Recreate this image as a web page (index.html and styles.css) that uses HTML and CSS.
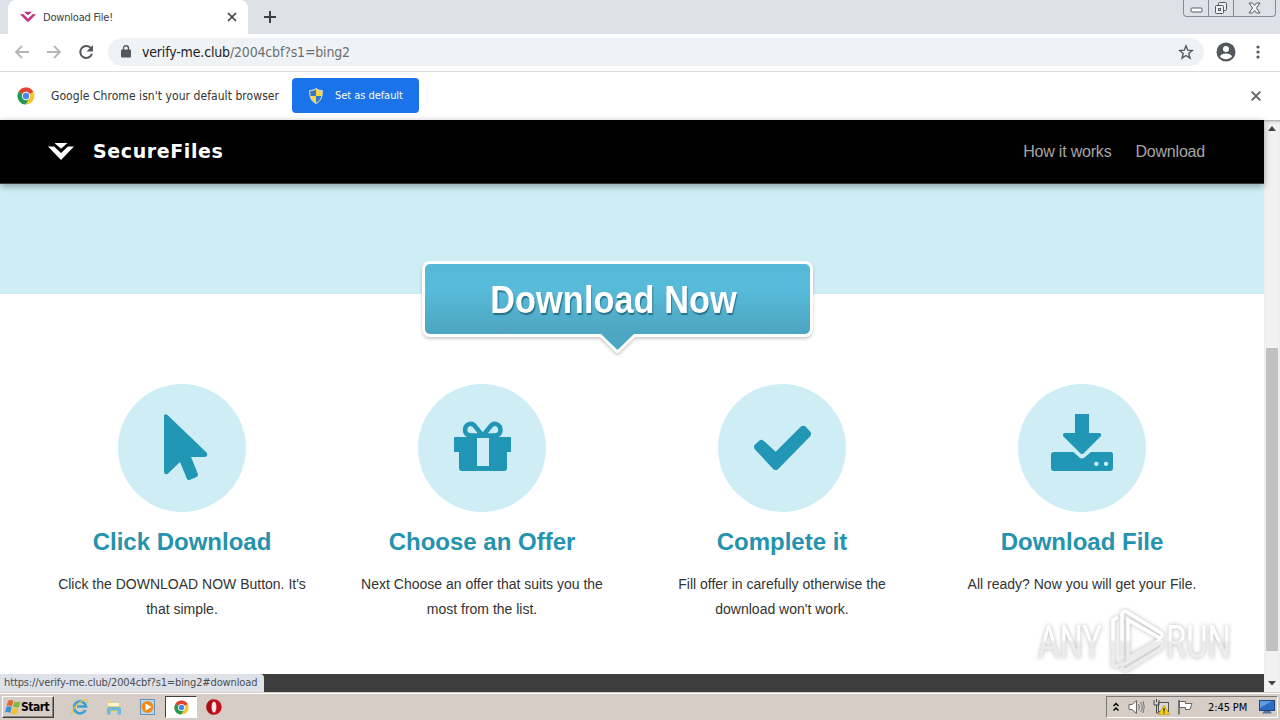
FILE: index.html
```html
<!DOCTYPE html>
<html lang="en">
<head>
    <meta charset="UTF-8">
    <meta name="viewport" content="width=device-width, initial-scale=1.0">
    <title>Download File!</title>
    <link rel="stylesheet" href="styles.css">
</head>
<body>
    <!-- Tab strip -->
    <div class="tabstrip">
        <div class="tab">
            <svg class="tab-icon" width="16" height="12" viewBox="0 0 28 18"><path fill="#c22d7d" d="M0 4h6l8 8 8-8h6L14 18zM7 0h14l-7 6z"/></svg>
            <span class="tab-title">Download File!</span>
            <svg width="10" height="10" viewBox="0 0 10 10"><path d="M1 1l8 8M9 1L1 9" stroke="#3c4043" stroke-width="1.7"/></svg>
        </div>
        <svg class="new-tab" width="12" height="12" viewBox="0 0 12 12"><path d="M6 0v12M0 6h12" stroke="#3c4043" stroke-width="2"/></svg>
        <div class="window-buttons">
            <span class="win-min"><svg width="13" height="6" viewBox="0 0 13 6"><rect x="1" y="1" width="11" height="4" rx="1" fill="#fff" stroke="#555b66"/></svg></span>
            <span class="win-max"><svg width="14" height="14" viewBox="0 0 14 14"><rect x="4.500" y="1.500" width="8" height="8" rx="1" fill="#eee" stroke="#555b66"/><rect x="1.500" y="4.500" width="8" height="8" rx="1" fill="#eee" stroke="#555b66"/><rect x="4.500" y="7.500" width="2" height="2" fill="none" stroke="#555b66"/></svg></span>
            <span class="win-close"><svg width="13" height="12" viewBox="0 0 13 12"><path d="M1 1h3.500l2 2.500L8.500 1H12L8.500 6 12 11H8.500l-2-2.500-2 2.500H1l3.500-5z" fill="#f4f4f4" stroke="#555b66"/></svg></span>
        </div>
    </div>

    <!-- Toolbar -->
    <div class="toolbar">
        <svg class="nav-icon" width="16" height="14" viewBox="0 0 16 14"><path d="M15 7H2M8 1L2 7l6 6" fill="none" stroke="#b4b7ba" stroke-width="1.800"/></svg>
        <svg class="nav-icon" width="16" height="14" viewBox="0 0 16 14"><path d="M1 7h13M8 1l6 6-6 6" fill="none" stroke="#b4b7ba" stroke-width="1.800"/></svg>
        <svg class="nav-icon" width="16" height="16" viewBox="0 0 16 16"><path d="M13.200 4.500A6 6 0 1 0 14 9.800" fill="none" stroke="#54575b" stroke-width="2"/><path d="M15 1v6.500H8.500z" fill="#54575b"/></svg>
        <div class="address">
            <svg width="10" height="13" viewBox="0 0 10 13"><rect y="4.500" width="10" height="8" rx="1" fill="#54575b"/><path d="M2.500 5V3.200a2.500 2.500 0 0 1 5 0V5" fill="none" stroke="#54575b" stroke-width="1.400"/></svg>
            <span class="url"><b>verify-me.club</b>/2004cbf?s1=bing2</span>
            <svg class="star" width="16" height="16" viewBox="0 0 16 16"><path d="M8 1.800l1.700 4.400 4.700.3-3.600 3 1.200 4.600L8 11.500l-4 2.600 1.200-4.600-3.600-3 4.700-.3z" fill="none" stroke="#54575b" stroke-width="1.400"/></svg>
        </div>
        <svg class="avatar" width="20" height="20" viewBox="0 0 20 20"><circle cx="10" cy="10" r="9.500" fill="#54575b"/><circle cx="10" cy="7" r="3" fill="#fff"/><path d="M4 14.500c1-4 11-4 12 0-3 3.600-9 3.600-12 0z" fill="#fff"/></svg>
        <svg class="menu" width="4" height="14" viewBox="0 0 4 14"><g fill="#54575b"><circle cx="2" cy="2" r="1.600"/><circle cx="2" cy="7" r="1.600"/><circle cx="2" cy="12" r="1.600"/></g></svg>
    </div>

    <!-- Default browser bar -->
    <div class="infobar">
        <svg width="18" height="18" viewBox="0 0 18 18"><circle cx="9" cy="9" r="8.500" fill="#f7c52d"/><path d="M1.600 4.800A8.500 8.500 0 0 1 16.400 4.800L9 9z" fill="#dd4433"/><path d="M1.600 4.800A8.500 8.500 0 0 0 8.500 17.500l4-6.500L9 9z" fill="#229a55"/><circle cx="9" cy="9" r="4.200" fill="#fff"/><circle cx="9" cy="9" r="3.200" fill="#4a85ec"/></svg>
        <span class="infobar-text">Google Chrome isn't your default browser</span>
        <button class="default-btn">
            <svg width="14" height="16" viewBox="0 0 14 16"><path d="M7 .5c2 1.500 4 2 6.300 2C13.500 9 12 13 7 15.500 2 13 .5 9 .7 2.500 3 2.500 5 2 7 .5z" fill="#f8d643" stroke="#d3dce6"/><path d="M7 1.500V8H1.500L1.200 3.300C4 3 5 2.500 7 1.500zM7 8h5.300c-.7 3.500-2.300 5.300-5.300 6.800z" fill="#3277c9"/></svg>
            <span>Set as default</span>
        </button>
        <svg class="infobar-close" width="10" height="10" viewBox="0 0 10 10"><path d="M.7.700l8.600 8.600M9.300.700L.7 9.300" stroke="#5f6368" stroke-width="1.900"/></svg>
    </div>

    <!-- Page -->
    <div class="viewport">
        <div class="page">
            <header class="header">
                <svg width="26" height="17" viewBox="0 0 26 17"><path fill="#fff" d="M0 3.500h6l7 6.500 7-6.500h6L13 17zM6.500 0h13L13 5.700z"/></svg>
                <span class="brand">SecureFiles</span>
                <nav>
                    <a>How it works</a>
                    <a>Download</a>
                </nav>
            </header>
            <div class="hero"></div>
            <a class="download-btn">
                <svg width="399" height="101" viewBox="-4 -4 399 101">
                    <defs>
                        <linearGradient id="btnFill" x1="0" y1="0" x2="0" y2="1">
                            <stop offset="0" stop-color="#55b8d6"/>
                            <stop offset=".3" stop-color="#57bbd9"/>
                            <stop offset=".8" stop-color="#4da5c1"/>
                            <stop offset="1" stop-color="#48a9c6"/>
                        </linearGradient>
                    </defs>
                    <path class="btn-outline" d="M8 0H383a8 8 0 0 1 8 8V68a8 8 0 0 1-8 8H213L197 91.500q-1.500 1.500-3 0L178 76H8a8 8 0 0 1-8-8V8a8 8 0 0 1 8-8z"/>
                    <path d="M8 3H383a5 5 0 0 1 5 5V68a5 5 0 0 1-5 5H212L195.500 89 179 73H8a5 5 0 0 1-5-5V8a5 5 0 0 1 5-5z" fill="url(#btnFill)"/>
                </svg>
                <span>Download Now</span>
            </a>
            <div class="steps">
                <div class="step">
                    <svg class="step-icon" viewBox="0 0 128 128"><path d="M46 32Q46 29 49.500 31L88.500 68.500Q90.500 72 87 73H73L80 90Q80 92 79 92.700L71.500 96Q69.500 96.500 69 95L62 78 49.500 90Q46.500 91 46 88z"/></svg>
                    <h2>Click Download</h2>
                    <p>Click the DOWNLOAD NOW Button. It's that simple.</p>
                </div>
                <div class="step">
                    <svg class="step-icon" viewBox="0 0 128 128">
                        <path fill-rule="evenodd" d="M37 53H92.500Q93 53 93 54V68H89V84Q89 87 86 87H44Q41 87 41 84V68H36V54Q36 53 37 53zM59 54V82H71V54z"/>
                        <path class="bow" d="M64.500 51.500L58 43.500C54 37 47 40 47 46 47 50 50 51.500 54 51.500zM65 51.500L71.500 43.500C75.500 37 82.500 40 82.500 46 82.500 50 80 51.500 76 51.500z"/>
                    </svg>
                    <h2>Choose an Offer</h2>
                    <p>Next Choose an offer that suits you the most from the list.</p>
                </div>
                <div class="step">
                    <svg class="step-icon" viewBox="0 0 128 128"><path d="M36.500 61Q35.300 63.500 37 65.500L55.500 85.200Q57.700 87 60 85.200L92 52.500Q94 50 92.500 48L87.500 42.500Q85.500 41 83 42.500L57.700 67.700 46 57Q43.500 55 41.500 56.500z"/></svg>
                    <h2>Complete it</h2>
                    <p>Fill offer in carefully otherwise the download won't work.</p>
                </div>
                <div class="step">
                    <svg class="step-icon" viewBox="0 0 128 128">
                        <path d="M57 30H71V49H81.500Q84 50 83 52L65.500 69.500Q64 70.500 62.500 69.500L45 52Q44.500 49.500 46.500 49H57z"/>
                        <path fill-rule="evenodd" d="M36 68H55.300L61.500 73.500Q64 75.500 66.500 73.500L73 68H93Q95 68 95 71V84Q95 87 92 87H36Q33 87 33 84V71Q33 68 36 68zM78.300 77.700a2.200 2.200 0 1 0 .1 0zM88 77.700a2.200 2.200 0 1 0 .1 0z"/>
                    </svg>
                    <h2>Download File</h2>
                    <p>All ready? Now you will get your File.</p>
                </div>
            </div>
            <footer class="footer"></footer>
        </div>
        <div class="scrollbar">
            <svg width="8" height="5" viewBox="0 0 8 5"><path d="M0 5l4-5 4 5z" fill="#444"/></svg>
            <div class="thumb"></div>
            <svg width="8" height="5" viewBox="0 0 8 5"><path d="M0 0l4 4.500L8 0z" fill="#444"/></svg>
        </div>
        <div class="status">https://verify-me.club/2004cbf?s1=bing2#download</div>
        <svg class="watermark" width="215" height="70" viewBox="0 0 215 70">
            <defs>
                <linearGradient id="wmFill" gradientUnits="userSpaceOnUse" x1="0" y1="0" x2="0" y2="70">
                    <stop offset=".48" stop-color="#fff"/>
                    <stop offset=".52" stop-color="#ececec"/>
                </linearGradient>
            </defs>
            <text x="2" y="52" textLength="64" lengthAdjust="spacingAndGlyphs">ANY</text>
            <text x="130" y="52" textLength="65" lengthAdjust="spacingAndGlyphs">RUN</text>
            <path d="M82 11l-5 3v44q2 4 6 1l4-2M86 53V8q1-4 5-2l34 21q3 3-1 5L92 14v38l33-19M85 61q3 5 7 2l32-20q4-3 2-7L85 60"/>
        </svg>
    </div>

    <!-- Taskbar -->
    <div class="taskbar">
        <div class="start">
            <svg width="16" height="16" viewBox="0 0 16 16"><path d="M3 2q3-2 5.500 0L7 7.500Q4.500 6 1.500 7z" fill="#e2683a"/><path d="M9.500 2.500q3 1.500 6 0L14 8q-3 1.300-6-.2z" fill="#7fb843"/><path d="M1.300 8q3-1.500 5.500.3L5.300 14Q3 12.300 0 13.500z" fill="#3f8fd4"/><path d="M7.700 8.700q3 1.500 6 .3L12 14.500q-3 1.500-5.700-.2z" fill="#f2c136"/></svg>
            <span>Start</span>
        </div>
        <div class="launch">
            <svg width="18" height="18" viewBox="0 0 18 18"><path d="M14.500 12A6 6 0 1 1 15 8.500H6" fill="none" stroke="#3c9fd9" stroke-width="2.600"/><path d="M2 15C-1 18 1 10 8 5s10-4 8 0" fill="none" stroke="#e2c34c" stroke-width="1.300"/></svg>
            <svg width="18" height="18" viewBox="0 0 18 18"><path d="M2 3h5l1 2h7v9H2z" fill="#ecd06c"/><path d="M3 5h11v3H3z" fill="#fff6ca"/><path d="M2 16.500V11q0-2 2-2h10q2 0 2 2v5.500h-3.500v-4h-7v4z" fill="#6db8dc"/></svg>
            <svg width="18" height="18" viewBox="0 0 18 18"><rect x="1.500" y="1.500" width="14" height="15" fill="#b8d8f0" stroke="#6494bd"/><circle cx="8.500" cy="9" r="6" fill="#f18b1d"/><path d="M6.500 5.500v7l6-3.500z" fill="#fff"/></svg>
        </div>
        <div class="task-active">
            <svg width="15" height="15" viewBox="0 0 18 18"><circle cx="9" cy="9" r="8.500" fill="#f7c52d"/><path d="M1.600 4.800A8.500 8.500 0 0 1 16.400 4.800L9 9z" fill="#dd4433"/><path d="M1.600 4.800A8.500 8.500 0 0 0 8.500 17.500l4-6.500L9 9z" fill="#229a55"/><circle cx="9" cy="9" r="4.200" fill="#fff"/><circle cx="9" cy="9" r="3.200" fill="#4a85ec"/></svg>
        </div>
        <svg class="opera" width="16" height="16" viewBox="0 0 16 16"><circle cx="8" cy="8" r="7.700" fill="#c4121a"/><ellipse cx="8" cy="8" rx="2.400" ry="5.500" fill="#f5e8e5"/><path d="M8 0a8 8 0 0 0 0 16C4 13 4 3 8 0z" fill="#8d0a10" opacity=".4"/></svg>
        <div class="tray">
            <svg width="6" height="10" viewBox="0 0 6 10"><path d="M.5 4L3 1.500 5.500 4M.5 8.500L3 6l2.500 2.500" fill="none" stroke="#000" stroke-width="1.500"/></svg>
            <svg class="tray-sound" width="17" height="16" viewBox="0 0 17 16"><path d="M1 5.500h3l4.500-4v13L4 10.500H1z" fill="#fff" stroke="#666"/><path d="M10.500 5q2 3 0 6M12.500 3q3.500 5 0 10M15 2q2.500 6 0 12" fill="none" stroke="#777"/></svg>
            <svg class="tray-net" width="17" height="16" viewBox="0 0 17 16"><rect x="5.500" y="3.500" width="10" height="9" fill="#d8d8d8" stroke="#555"/><path d="M1 1v5h5V1M3.500 6v8h5M3.500 0v3" fill="none" stroke="#444"/><path d="M11 6l5.500 9.500h-11z" fill="#f6cf16" stroke="#b99409" stroke-width=".6"/><path d="M11 9v3.500M11 13.500v1" stroke="#222" stroke-width="1.300"/></svg>
            <svg class="tray-flag" width="17" height="16" viewBox="0 0 17 16"><path d="M2.500 2.500h6v2h6.500l-2 6H8.500v-2h-6z" fill="#fff" stroke="#666"/><path d="M2 1v14.500" stroke="#666" stroke-width="1.600"/></svg>
            <span class="clock">2:45 PM</span>
            <svg width="16" height="14" viewBox="0 0 16 14"><rect x=".5" y=".5" width="15" height="10" fill="#2e6cc4" stroke="#1d457e"/><path d="M1 1h12L1 8z" fill="#609be0"/><path d="M5 11h6l2 2.500H3z" fill="#55749c"/></svg>
        </div>
    </div>
</body>
</html>
```
FILE: styles.css
```css
* {
    box-sizing: border-box;
}

body {
    margin: 0;
    width: 1280px;
    height: 720px;
    overflow: hidden;
    display: flex;
    flex-direction: column;
    font-family: "DejaVu Sans Condensed", "DejaVu Sans", sans-serif;
    background: #fff;
}

svg {
    display: block;
    flex-shrink: 0;
}

/* Browser chrome */
.tabstrip {
    height: 34px;
    display: flex;
    align-items: flex-start;
    background: #dee1e8;
    padding-left: 8px;
}

.tab {
    width: 240px;
    height: 34px;
    display: flex;
    align-items: center;
    padding: 0 11px 0 12px;
    background: #fff;
    border-radius: 8px 8px 0 0;
}

.tab-title {
    flex: 1;
    margin-left: 7px;
    font-size: 11px;
    letter-spacing: -0.2px;
    color: #3c4043;
}

.new-tab {
    margin: 11px 0 0 16px;
}

.window-buttons {
    display: flex;
    width: 93px;
    height: 17px;
    margin-left: auto;
    margin-right: 4px;
    border: 1px solid #858c99;
    border-top: 0;
    border-radius: 0 0 4px 4px;
}

.window-buttons span {
    display: flex;
    align-items: center;
    justify-content: center;
    border-right: 1px solid #858c99;
}

.win-min {
    width: 25px;
    padding-top: 4px;
}

.win-max {
    width: 25px;
}

.window-buttons .win-close {
    flex: 1;
    border-right: 0;
}

.toolbar {
    height: 38px;
    display: flex;
    align-items: center;
    padding: 0 20px 2px 14px;
    border-bottom: 1px solid #d9dbde;
}

.nav-icon {
    margin-right: 16px;
}

.address {
    flex: 1;
    height: 28px;
    display: flex;
    align-items: center;
    margin-left: -2px;
    padding: 0 10px 0 13px;
    border-radius: 14px;
    background: #f0f3f5;
}

.url {
    flex: 1;
    margin-left: 11px;
    font-size: 14px;
    letter-spacing: -0.17px;
    color: #6b6f73;
}

.url b {
    font-weight: normal;
    color: #202124;
}

.avatar {
    margin: 0 20px 0 12px;
}

.infobar {
    height: 48px;
    display: flex;
    align-items: center;
    padding: 0 19px 1px 17px;
}

.infobar-text {
    width: 241px;
    margin-left: 16px;
    font-size: 12px;
    letter-spacing: 0.06px;
    white-space: nowrap;
    color: #333;
}

.default-btn {
    display: flex;
    align-items: center;
    width: 127px;
    height: 35px;
    padding: 0 0 0 17px;
    border: 0;
    border-radius: 4px;
    background: #1a73e8;
    color: #fff;
    font-family: inherit;
    font-size: 11px;
    letter-spacing: -0.05px;
    white-space: nowrap;
}

.default-btn span {
    margin-left: 12px;
}

.infobar-close {
    margin-left: auto;
}

/* Page */
.viewport {
    position: relative;
    height: 572px;
    display: flex;
}

.page {
    width: 1264px;
    display: flex;
    flex-direction: column;
    font-family: "Liberation Sans", Arial, sans-serif;
}

.header {
    position: relative;
    z-index: 1;
    height: 64px;
    display: flex;
    align-items: center;
    padding: 0 59px 0 48px;
    background: #000;
    border-bottom: 1px solid #35393b;
    box-shadow: 0 2px 7px rgba(0, 0, 0, 0.35);
}

.brand {
    margin-left: 19px;
    padding-bottom: 2px;
    font-family: "DejaVu Sans", sans-serif;
    font-size: 19px;
    font-weight: bold;
    letter-spacing: 0.6px;
    color: #fff;
}

nav {
    display: flex;
    gap: 24px;
    margin-left: auto;
    padding-top: 1px;
}

nav a {
    font-size: 16px;
    letter-spacing: -0.2px;
    color: #a6a6a6;
}

.hero {
    height: 110px;
    background: #ceedf5;
}

.download-btn {
    position: relative;
    width: 391px;
    height: 93px;
    margin: -33px 0 30px 422px;
}

.download-btn svg {
    margin: -4px;
}

.btn-outline {
    fill: #fff;
    filter: drop-shadow(0 2px 1.5px rgba(0, 0, 0, 0.2));
}

.download-btn span {
    position: absolute;
    top: 0;
    left: -4px;
    width: 391px;
    line-height: 78px;
    text-align: center;
    white-space: nowrap;
    font-size: 38px;
    font-weight: bold;
    color: #fff;
    text-shadow: 1px 2px 1px rgba(0, 60, 80, 0.55);
    transform: scaleX(0.905);
}

.steps {
    flex: 1;
    display: grid;
    grid-template-columns: repeat(4, 300px);
    justify-content: center;
}

.step {
    padding: 0 25px;
    text-align: center;
}

.step-icon {
    width: 128px;
    height: 128px;
    margin: 0 auto;
    border-radius: 50%;
    background: #ceedf5;
    fill: #2196b5;
}

.step-icon .bow {
    fill: none;
    stroke: #2196b5;
    stroke-width: 4.5;
    stroke-linejoin: round;
}

.step h2 {
    margin: 16px 0;
    font-size: 24px;
    line-height: 28px;
    color: #2593ae;
}

.step p {
    margin: 0;
    font-size: 14px;
    line-height: 25px;
    color: #333;
}

.footer {
    height: 18px;
    background: #3e3e3e;
}

.scrollbar {
    width: 16px;
    display: flex;
    flex-direction: column;
    align-items: center;
    padding: 6px 0;
    background: #f1f1f1;
    box-shadow: inset 0 3px 3px -2px #999;
}

.thumb {
    width: 12px;
    height: 303px;
    margin: 217px 0 auto;
    background: #c1c1c1;
}

.status {
    position: absolute;
    left: 0;
    bottom: 0;
    width: 264px;
    height: 18px;
    padding-left: 4px;
    line-height: 18px;
    font-size: 11px;
    letter-spacing: -0.12px;
    white-space: nowrap;
    color: #4a4d51;
    background: #dee1e8;
    border-radius: 0 4px 0 0;
}

.watermark {
    position: absolute;
    left: 1036px;
    top: 486px;
    overflow: visible;
    filter: drop-shadow(0 0 2px rgba(0, 0, 0, 0.28));
}

.watermark text {
    font-family: Roboto, sans-serif;
    font-size: 47px;
    font-weight: 400;
    fill: url(#wmFill);
}

.watermark path {
    fill: none;
    stroke: url(#wmFill);
    stroke-width: 3.5;
}

/* Taskbar */
.taskbar {
    height: 28px;
    display: flex;
    align-items: center;
    padding: 2px 2px 0;
    background: #d6cec6;
    box-shadow: inset 0 1px #d6cec6, inset 0 2px #fff;
}

.start {
    width: 52px;
    height: 22px;
    display: flex;
    align-items: center;
    padding-left: 2px;
    border: 1px solid;
    border-color: #fff #404040 #404040 #fff;
    box-shadow: inset -1px -1px #8b8680;
    font-size: 12px;
    font-weight: bold;
    letter-spacing: -0.5px;
}

.launch {
    display: flex;
    gap: 16px;
    margin-left: 17px;
}

.task-active {
    width: 32px;
    height: 22px;
    display: flex;
    align-items: center;
    justify-content: center;
    margin-left: 8px;
    background: #fff;
    border: 1px solid;
    border-color: #404040 #fff #fff #404040;
}

.opera {
    margin-left: 9px;
}

.tray {
    width: 172px;
    height: 22px;
    display: flex;
    align-items: center;
    margin-left: auto;
    padding-left: 6px;
    border: 1px solid;
    border-color: #7d7872 #fff #fff #7d7872;
}

.tray-sound {
    margin-left: 9px;
}

.tray-net {
    margin-left: 8px;
}

.tray-flag {
    margin-left: 7px;
}

.clock {
    width: 51px;
    margin-left: 14px;
    font-size: 11px;
    letter-spacing: -0.1px;
    white-space: nowrap;
}
```
